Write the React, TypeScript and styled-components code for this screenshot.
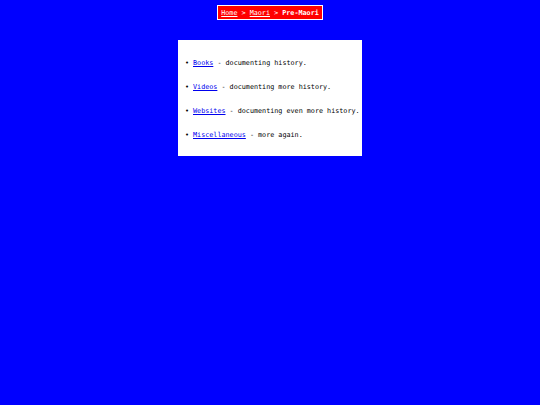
import React from 'react'
import styled, { createGlobalStyle } from 'styled-components'

const GlobalStyle = createGlobalStyle`
  html, body {
    margin: 0;
    padding: 0;
    background: #0000ff;
  }
  body {
    font-family: "DejaVu Sans Mono", "Liberation Mono", monospace;
    font-size: 6.75px;
    line-height: 8px;
  }
`

const Page = styled.div`
  display: flex;
  flex-direction: column;
  align-items: center;
  padding-top: 5px;
  min-height: 100vh;
  box-sizing: border-box;
`

const Crumbs = styled.nav`
  background: #ff0000;
  border: 1px solid #ffffff;
  padding: 3px 3px 2px;
  color: #ffffff;
  white-space: pre;
`

const CrumbLink = styled.a`
  color: #ffffff;
  text-decoration: underline;
`

const Current = styled.strong`
  font-weight: bold;
`

const Panel = styled.main`
  margin-top: 20px;
  width: 184px;
  background: #ffffff;
  box-sizing: border-box;
  padding: 19px 0 17px 7px;
`

const List = styled.ul`
  list-style: none;
  margin: 0;
  padding: 0;
  display: flex;
  flex-direction: column;
  gap: 16px;
`

const Item = styled.li`
  display: flex;
  white-space: pre;
  color: #000000;
`

const Bullet = styled.span`
  width: 8px;
`

const ItemLink = styled.a`
  color: #0000ee;
  text-decoration: underline;
`

const items = [
  { name: 'Books', text: ' - documenting history.' },
  { name: 'Videos', text: ' - documenting more history.' },
  { name: 'Websites', text: ' - documenting even more history.' },
  { name: 'Miscellaneous', text: ' - more again.' },
]

const App = () => (
  <>
    <GlobalStyle />
    <Page>
      <Crumbs>
        <CrumbLink href="#">Home</CrumbLink> &gt; <CrumbLink href="#">Maori</CrumbLink> &gt;{' '}
        <Current>Pre-Maori</Current>
      </Crumbs>
      <Panel>
        <List>
          {items.map((it) => (
            <Item key={it.name}>
              <Bullet>•</Bullet>
              <ItemLink href="#">{it.name}</ItemLink>
              {it.text}
            </Item>
          ))}
        </List>
      </Panel>
    </Page>
  </>
)

export default App
